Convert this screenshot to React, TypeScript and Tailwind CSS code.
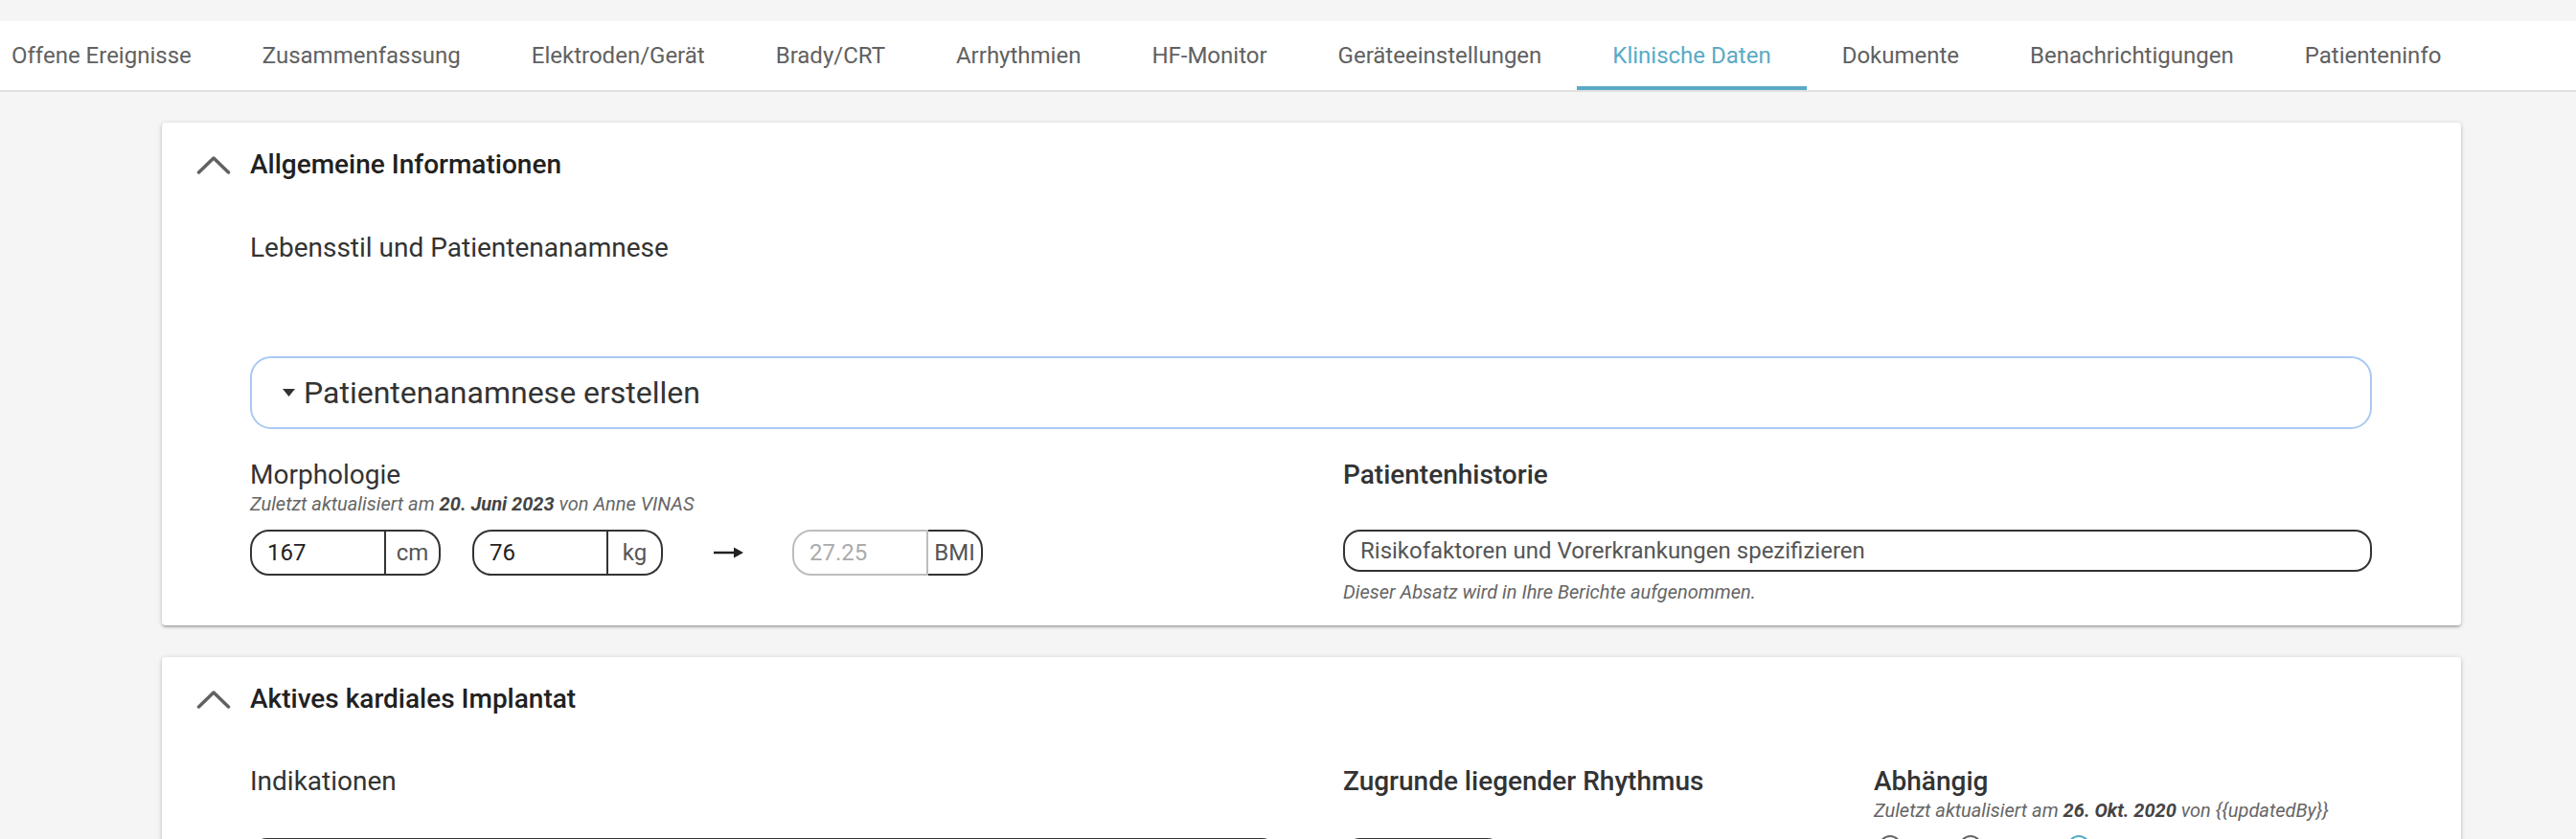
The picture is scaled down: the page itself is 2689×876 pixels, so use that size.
import type { ReactNode } from 'react';

const TABS = [
  'Offene Ereignisse',
  'Zusammenfassung',
  'Elektroden/Gerät',
  'Brady/CRT',
  'Arrhythmien',
  'HF-Monitor',
  'Geräteeinstellungen',
  'Klinische Daten',
  'Dokumente',
  'Benachrichtigungen',
  'Patienteninfo',
];

const ACTIVE = 'Klinische Daten';

function ChevronUp() {
  return (
    <svg width="36" height="20" viewBox="0 0 36 20" fill="none" aria-hidden="true">
      <path d="M2.5 18 L18 3 L33.5 18" stroke="#616161" strokeWidth="3.5" strokeLinecap="round" strokeLinejoin="round" />
    </svg>
  );
}

function Card({ title, children }: { title: string; children: ReactNode }) {
  return (
    <section className="w-[2400px] bg-white rounded-[4px] shadow-[0_2px_2px_0_rgba(0,0,0,0.14),0_3px_1px_-2px_rgba(0,0,0,0.12),0_1px_5px_0_rgba(0,0,0,0.2)] pt-[28px] pb-[24px]">
      <div className="flex items-center gap-[20px] pl-[36px] h-[32px]">
        <ChevronUp />
        <h2 className="text-[28px] leading-[32px] font-medium text-[#212121]">{title}</h2>
      </div>
      <div className="pl-[92px] pr-[93px]">{children}</div>
    </section>
  );
}

function UnitInput({ value, unit, muted }: { value: string; unit: string; muted?: boolean }) {
  return (
    <div className="flex h-[48px] w-[199px]">
      <div
        className={`flex-1 flex items-center pl-[16px] border-2 rounded-l-[20px] text-[24px] ${
          muted ? 'border-[#bdbdbd] text-[#ababab]' : 'border-[#333333] text-[#222222]'
        }`}
      >
        {value}
      </div>
      <div className="w-[57px] flex items-center justify-center border-2 border-l-0 border-[#333333] rounded-r-[20px] text-[24px] text-[#555555]">
        {unit}
      </div>
    </div>
  );
}

function Updated({ date, by }: { date: string; by: string }) {
  return (
    <p className="mt-[4px] text-[20px] leading-[22px] italic text-[#666666]">
      Zuletzt aktualisiert am <span className="font-bold text-[#444444]">{date}</span> von {by}
    </p>
  );
}

function Radio({ checked }: { checked?: boolean }) {
  return (
    <span
      className={`w-[24px] h-[24px] rounded-full border-2 flex items-center justify-center ${
        checked ? 'border-[#5aaac6]' : 'border-[#666666]'
      }`}
    >
      {checked && <span className="w-[12px] h-[12px] rounded-full bg-[#5aaac6]" />}
    </span>
  );
}

export default function App() {
  return (
    <div className="min-h-screen bg-[#f5f5f5] font-['Roboto','Liberation_Sans',sans-serif] text-[#333333]">
      <div className="h-[22px]" />
      <nav className="h-[74px] bg-white border-b-2 border-[#e0e0e0] overflow-hidden">
        <div className="flex h-full -ml-[25px]">
          {TABS.map((t) => (
            <div
              key={t}
              className={`flex items-center px-[37px] border-y-4 border-transparent text-[24px] whitespace-nowrap ${
                t === ACTIVE ? 'border-b-[#5aaac6] text-[#5aaac6]' : 'text-[#616161]'
              }`}
            >
              {t}
            </div>
          ))}
        </div>
      </nav>

      <main className="pt-[32px] pl-[169px] pb-[40px] flex flex-col gap-[33px]">
        <Card title="Allgemeine Informationen">
          <h3 className="mt-[55px] text-[28px] leading-[32px] text-[#333333]">Lebensstil und Patientenanamnese</h3>

          <div className="mt-[97px] h-[76px] border-2 border-[#a9c9f3] rounded-[22px] flex items-center pl-[32px] gap-[9px]">
            <svg width="13" height="8" viewBox="0 0 13 8" aria-hidden="true">
              <polygon points="0,0 13,0 6.5,8" fill="#333333" />
            </svg>
            <span className="text-[32px] text-[#333333]">Patientenanamnese erstellen</span>
          </div>

          <div className="mt-[33px] grid grid-cols-[1141px_1fr]">
            <div>
              <h4 className="text-[28px] leading-[30px] text-[#333333]">Morphologie</h4>
              <Updated date="20. Juni 2023" by="Anne VINAS" />
              <div className="mt-[16px] flex items-center">
                <UnitInput value="167" unit="cm" />
                <div className="ml-[33px]">
                  <UnitInput value="76" unit="kg" />
                </div>
                <svg className="ml-[53px]" width="31" height="12" viewBox="0 0 31 12" aria-hidden="true">
                  <rect x="0" y="4.75" width="24" height="2.5" fill="#222222" />
                  <polygon points="21,0.5 31,6 21,11.5" fill="#222222" />
                </svg>
                <div className="ml-[51px]">
                  <UnitInput value="27.25" unit="BMI" muted />
                </div>
              </div>
            </div>
            <div>
              <h4 className="text-[28px] leading-[30px] font-medium text-[#333333]">Patientenhistorie</h4>
              <div className="mt-[42px] h-[44px] border-2 border-[#333333] rounded-[18px] flex items-center pl-[16px] text-[24px] text-[#555555]">
                Risikofaktoren und Vorerkrankungen spezifizieren
              </div>
              <p className="mt-[10px] text-[20px] leading-[22px] italic text-[#666666]">
                Dieser Absatz wird in Ihre Berichte aufgenommen.
              </p>
            </div>
          </div>
        </Card>

        <Card title="Aktives kardiales Implantat">
          <div className="mt-[55px] grid grid-cols-[1141px_554px_1fr]">
            <div>
              <h4 className="text-[28px] leading-[30px] text-[#333333]">Indikationen</h4>
              <div className="mt-[44px] w-[1074px] h-[48px] border-2 border-[#333333] rounded-[18px]" />
            </div>
            <div>
              <h4 className="text-[28px] leading-[30px] font-medium text-[#333333]">Zugrunde liegender Rhythmus</h4>
              <div className="mt-[44px] w-[168px] h-[48px] border-2 border-[#333333] rounded-[18px]" />
            </div>
            <div>
              <h4 className="text-[28px] leading-[30px] font-medium text-[#333333]">Abhängig</h4>
              <Updated date="26. Okt. 2020" by="{{updatedBy}}" />
              <div className="mt-[15px] flex items-center pl-[5px]">
                <div className="w-[84px]">
                  <Radio />
                </div>
                <div className="w-[113px]">
                  <Radio />
                </div>
                <Radio checked />
              </div>
            </div>
          </div>
        </Card>
      </main>
    </div>
  );
}
